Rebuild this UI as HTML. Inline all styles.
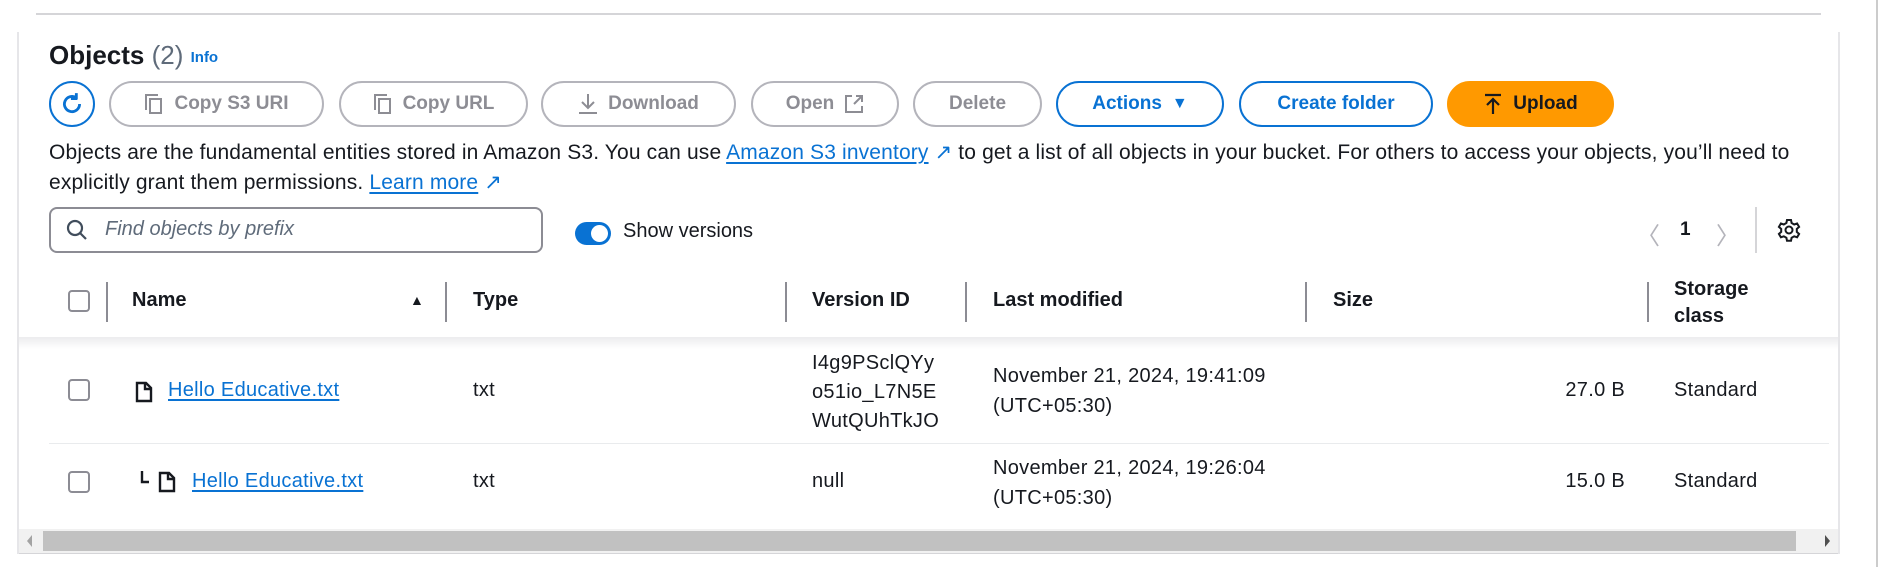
<!DOCTYPE html>
<html><head><meta charset="utf-8"><style>
*{box-sizing:border-box;margin:0;padding:0}
body{width:1879px;height:567px;background:#fff;font-family:"Liberation Sans",sans-serif;color:#16191f;position:relative;overflow:hidden}
.a{position:absolute;white-space:nowrap}
.btn{position:absolute;top:81px;height:46px;border:2px solid #b4b4bb;border-radius:23px;color:#8d8d94;font-weight:bold;font-size:19px;display:flex;align-items:center;justify-content:center;gap:10px}
.blue{border-color:#0972d3;color:#0972d3}
.lnk{color:#0972d3;text-decoration:underline;text-underline-offset:3px;text-decoration-thickness:2px}
.cb{position:absolute;width:22px;height:22px;border:2px solid #8c8c94;border-radius:4px}
.div{position:absolute;width:2px;background:#8c8c94;top:282px;height:40px}
.h{position:absolute;font-weight:bold;font-size:20px;top:289px}
.t{position:absolute;font-size:20px;white-space:nowrap;letter-spacing:0.3px}
</style></head><body>
<div class="a" style="left:36px;top:13px;width:1785px;height:2px;background:#d5d5d8"></div>
<div class="a" style="left:17px;top:32px;width:2px;height:522px;background:#e6e6e9"></div>
<div class="a" style="left:1838px;top:32px;width:2px;height:522px;background:#e6e6e9"></div>
<div class="a" style="left:1876px;top:0;width:2px;height:567px;background:#ccc"></div>

<div class="a" style="left:49px;top:40px;font-size:26px;font-weight:bold">Objects <span style="font-weight:normal;color:#5f6b7a">(2)</span> <span style="font-size:15px;color:#0972d3;vertical-align:2px">Info</span></div>

<div class="btn blue" style="left:49px;width:46px;border-radius:50%;"><svg width="26" height="26" viewBox="0 0 24 24" fill="none" stroke="#0972d3" stroke-width="2.6"><path d="M19 12a7 7 0 1 1-3-5.7"/><path d="M16 2v5h-5" stroke-linejoin="round"/></svg></div>
<div class="btn" style="left:109px;width:215px"><svg width="20" height="22" viewBox="0 0 20 22" fill="none" stroke="#8d8d94" stroke-width="2"><path d="M2 17V2h12"/><rect x="6" y="6" width="11" height="14"/></svg>Copy S3 URI</div>
<div class="btn" style="left:339px;width:189px"><svg width="20" height="22" viewBox="0 0 20 22" fill="none" stroke="#8d8d94" stroke-width="2"><path d="M2 17V2h12"/><rect x="6" y="6" width="11" height="14"/></svg>Copy URL</div>
<div class="btn" style="left:541px;width:195px"><svg width="20" height="22" viewBox="0 0 20 22" fill="none" stroke="#8d8d94" stroke-width="2"><path d="M10 1v14M4 9l6 6 6-6M1 20h18"/></svg>Download</div>
<div class="btn" style="left:751px;width:148px">Open <svg width="20" height="20" viewBox="0 0 20 20" fill="none" stroke="#8d8d94" stroke-width="2"><path d="M8 2H2v16h16v-6M12 2h6v6M18 2l-8 8"/></svg></div>
<div class="btn" style="left:913px;width:129px">Delete</div>
<div class="btn blue" style="left:1056px;width:168px">Actions <span style="font-size:16px">▼</span></div>
<div class="btn blue" style="left:1239px;width:194px">Create folder</div>
<div class="btn" style="left:1447px;width:167px;background:#ff9900;border-color:#ff9900;color:#16191f"><svg width="20" height="22" viewBox="0 0 20 22" fill="none" stroke="#16191f" stroke-width="2.2"><path d="M2 2h16M10 21V7M4 12l6-6 6 6"/></svg>Upload</div>

<div class="a" style="left:49px;top:138px;font-size:21px;line-height:30px;letter-spacing:0.15px">Objects are the fundamental entities stored in Amazon S3. You can use <span class="lnk">Amazon S3 inventory</span> <span style="color:#0972d3">↗</span> to get a list of all objects in your bucket. For others to access your objects, you’ll need to<br>explicitly grant them permissions. <span class="lnk">Learn more</span> <span style="color:#0972d3">↗</span></div>

<div class="a" style="left:49px;top:207px;width:494px;height:46px;border:2px solid #8c8c94;border-radius:8px"></div>
<svg class="a" style="left:66px;top:219px" width="22" height="22" viewBox="0 0 22 22" fill="none" stroke="#414d5c" stroke-width="2.2"><circle cx="9" cy="9" r="7"/><path d="M14 14l6 6"/></svg>
<div class="a" style="left:105px;top:218px;font-size:20px;font-style:italic;color:#5f6b7a">Find objects by prefix</div>
<div class="a" style="left:575px;top:222px;width:36px;height:23px;border-radius:12px;background:#0972d3"></div>
<div class="a" style="left:591px;top:225px;width:17px;height:17px;border-radius:50%;background:#fff"></div>
<div class="a" style="left:623px;top:220px;font-size:20px">Show versions</div>
<div class="a" style="left:1636px;top:216px;font-size:24px;color:#b4b4bb">〈</div>
<div class="a" style="left:1680px;top:219px;font-size:19px;font-weight:bold">1</div>
<div class="a" style="left:1716px;top:216px;font-size:24px;color:#b4b4bb">〉</div>
<div class="a" style="left:1755px;top:207px;width:2px;height:46px;background:#d5d5d8"></div>
<svg class="a" style="left:1777px;top:218px" width="24" height="24" viewBox="0 0 24 24" fill="none" stroke="#16191f" stroke-width="2"><circle cx="12" cy="12" r="3.5"/><path d="M10 2h4l.6 3 2.6 1.5 2.9-1 2 3.4-2.3 2v3l2.3 2-2 3.4-2.9-1-2.6 1.5-.6 3h-4l-.6-3-2.6-1.5-2.9 1-2-3.4 2.3-2v-3l-2.3-2 2-3.4 2.9 1L9.4 5z"/></svg>

<div class="cb" style="left:68px;top:290px"></div>
<div class="div" style="left:106px"></div><div class="div" style="left:445px"></div><div class="div" style="left:785px"></div><div class="div" style="left:965px"></div><div class="div" style="left:1305px"></div><div class="div" style="left:1647px"></div>
<div class="h" style="left:132px">Name</div>
<div class="a" style="left:410px;top:292px;font-size:14px">▲</div>
<div class="h" style="left:473px">Type</div>
<div class="h" style="left:812px">Version ID</div>
<div class="h" style="left:993px">Last modified</div>
<div class="h" style="left:1333px">Size</div>
<div class="h" style="left:1674px;top:276px;line-height:27px">Storage<br>class</div>
<div class="a" style="left:19px;top:337px;width:1819px;height:12px;background:linear-gradient(#ececee,#fff)"></div>

<div class="cb" style="left:68px;top:379px"></div>
<svg class="a" style="left:135px;top:381px" width="18" height="22" viewBox="0 0 18 22" fill="none" stroke="#16191f" stroke-width="2.4"><path d="M2 2h9l5 5v13H2z"/><path d="M10 2v6h6"/></svg>
<div class="t lnk" style="left:168px;top:379px">Hello Educative.txt</div>
<div class="t" style="left:473px;top:379px">txt</div>
<div class="t" style="left:812px;top:349px;line-height:29px">I4g9PSclQYy<br>o51io_L7N5E<br>WutQUhTkJO</div>
<div class="t" style="left:993px;top:361px;line-height:30px">November 21, 2024, 19:41:09<br>(UTC+05:30)</div>
<div class="t" style="left:1545px;top:379px;width:80px;text-align:right">27.0 B</div>
<div class="t" style="left:1674px;top:379px">Standard</div>
<div class="a" style="left:49px;top:443px;width:1780px;height:1px;background:#e9ebed"></div>

<div class="cb" style="left:68px;top:471px"></div>
<svg class="a" style="left:140px;top:470px" width="10" height="14" viewBox="0 0 10 14" fill="none" stroke="#16191f" stroke-width="2.4"><path d="M2 1v11h7"/></svg>
<svg class="a" style="left:158px;top:471px" width="18" height="22" viewBox="0 0 18 22" fill="none" stroke="#16191f" stroke-width="2.4"><path d="M2 2h9l5 5v13H2z"/><path d="M10 2v6h6"/></svg>
<div class="t lnk" style="left:192px;top:470px">Hello Educative.txt</div>
<div class="t" style="left:473px;top:470px">txt</div>
<div class="t" style="left:812px;top:470px">null</div>
<div class="t" style="left:993px;top:453px;line-height:30px">November 21, 2024, 19:26:04<br>(UTC+05:30)</div>
<div class="t" style="left:1545px;top:470px;width:80px;text-align:right">15.0 B</div>
<div class="t" style="left:1674px;top:470px">Standard</div>

<div class="a" style="left:19px;top:529px;width:1819px;height:24px;background:#f1f1f1"></div>
<div class="a" style="left:43px;top:531px;width:1753px;height:20px;background:#c1c1c1"></div>
<div class="a" style="left:27px;top:535px;width:0;height:0;border:6px solid transparent;border-right:5px solid #a3a3a3;border-left:0"></div>
<div class="a" style="left:1825px;top:535px;width:0;height:0;border:6px solid transparent;border-left:5px solid #505050;border-right:0"></div>
<div class="a" style="left:19px;top:553px;width:1819px;height:1px;background:#d5d5d8"></div>
</body></html>
